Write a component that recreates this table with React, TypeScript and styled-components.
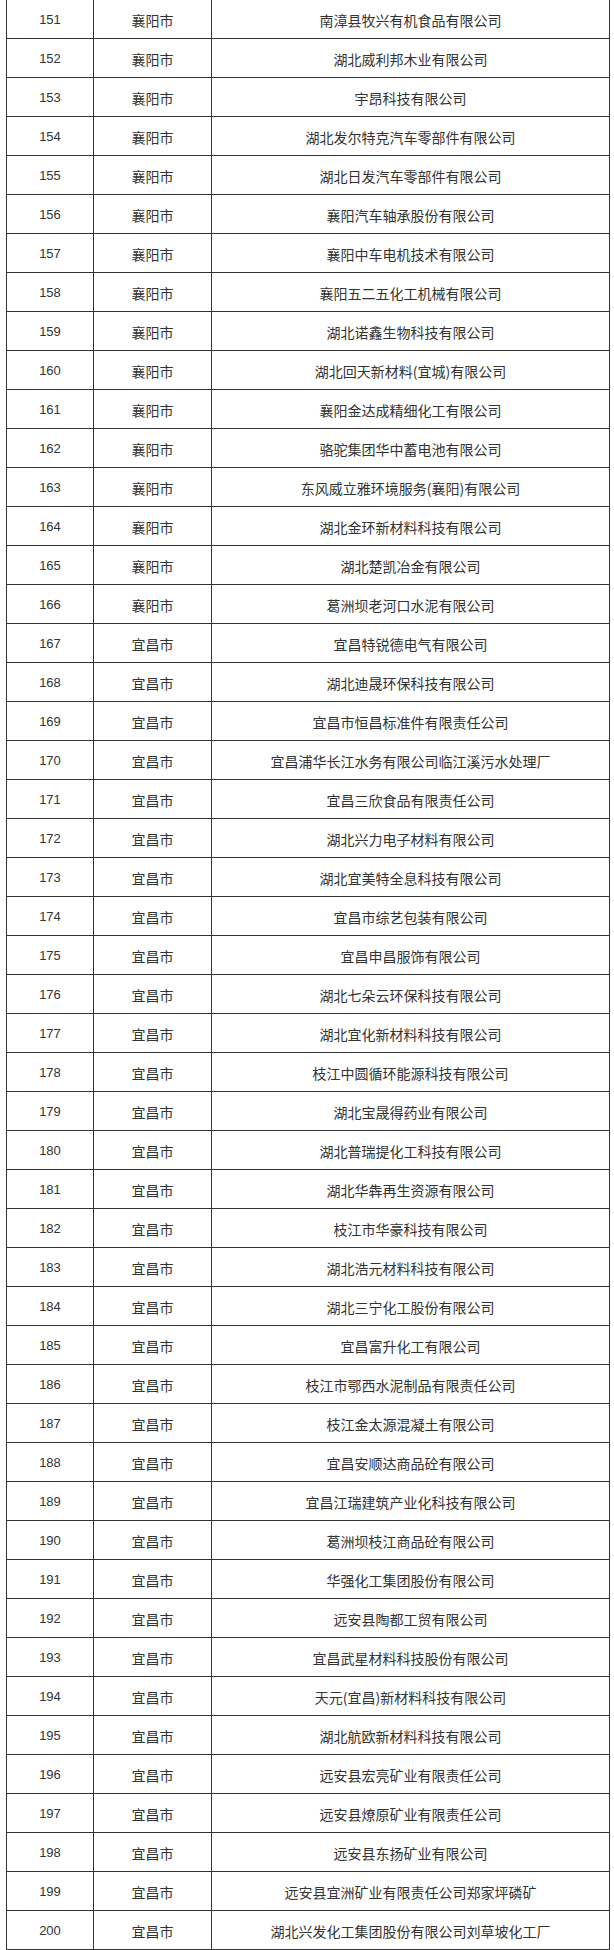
import React from "react";
import styled, { createGlobalStyle } from "styled-components";

const GlobalStyle = createGlobalStyle`
  html, body {
    margin: 0;
    padding: 0;
    background: #ffffff;
  }
  body {
    font-family: "Noto Sans CJK SC", "Noto Sans", sans-serif;
    color: #333333;
  }
`;

const Page = styled.div`
  width: 614px;
  padding-left: 6px;
  box-sizing: border-box;
  margin-top: -1px;
`;

const Table = styled.div`
  display: grid;
  grid-template-columns: 87px 118px 398px;
  width: 604px;
  border-left: 1px solid #333333;
  border-top: 1px solid #333333;
  box-sizing: border-box;
`;

const Cell = styled.div<{ $num?: boolean }>`
  box-sizing: border-box;
  height: 39px;
  border-right: 1px solid #333333;
  border-bottom: 1px solid #333333;
  display: flex;
  align-items: center;
  justify-content: center;
  font-family: ${(p) =>
    p.$num
      ? '"Liberation Sans", "Noto Sans CJK SC", sans-serif'
      : '"Noto Sans CJK SC", "Noto Sans", sans-serif'};
  font-size: ${(p) => (p.$num ? "13px" : "14px")};
  line-height: 1;
  color: #333333;
  white-space: nowrap;
  padding-top: 1px;
`;

const rows: [number, string, string][] = [
  [151, "襄阳市", "南漳县牧兴有机食品有限公司"],
  [152, "襄阳市", "湖北威利邦木业有限公司"],
  [153, "襄阳市", "宇昂科技有限公司"],
  [154, "襄阳市", "湖北发尔特克汽车零部件有限公司"],
  [155, "襄阳市", "湖北日发汽车零部件有限公司"],
  [156, "襄阳市", "襄阳汽车轴承股份有限公司"],
  [157, "襄阳市", "襄阳中车电机技术有限公司"],
  [158, "襄阳市", "襄阳五二五化工机械有限公司"],
  [159, "襄阳市", "湖北诺鑫生物科技有限公司"],
  [160, "襄阳市", "湖北回天新材料(宜城)有限公司"],
  [161, "襄阳市", "襄阳金达成精细化工有限公司"],
  [162, "襄阳市", "骆驼集团华中蓄电池有限公司"],
  [163, "襄阳市", "东风威立雅环境服务(襄阳)有限公司"],
  [164, "襄阳市", "湖北金环新材料科技有限公司"],
  [165, "襄阳市", "湖北楚凯冶金有限公司"],
  [166, "襄阳市", "葛洲坝老河口水泥有限公司"],
  [167, "宜昌市", "宜昌特锐德电气有限公司"],
  [168, "宜昌市", "湖北迪晟环保科技有限公司"],
  [169, "宜昌市", "宜昌市恒昌标准件有限责任公司"],
  [170, "宜昌市", "宜昌浦华长江水务有限公司临江溪污水处理厂"],
  [171, "宜昌市", "宜昌三欣食品有限责任公司"],
  [172, "宜昌市", "湖北兴力电子材料有限公司"],
  [173, "宜昌市", "湖北宜美特全息科技有限公司"],
  [174, "宜昌市", "宜昌市综艺包装有限公司"],
  [175, "宜昌市", "宜昌申昌服饰有限公司"],
  [176, "宜昌市", "湖北七朵云环保科技有限公司"],
  [177, "宜昌市", "湖北宜化新材料科技有限公司"],
  [178, "宜昌市", "枝江中圆循环能源科技有限公司"],
  [179, "宜昌市", "湖北宝晟得药业有限公司"],
  [180, "宜昌市", "湖北普瑞提化工科技有限公司"],
  [181, "宜昌市", "湖北华犇再生资源有限公司"],
  [182, "宜昌市", "枝江市华豪科技有限公司"],
  [183, "宜昌市", "湖北浩元材料科技有限公司"],
  [184, "宜昌市", "湖北三宁化工股份有限公司"],
  [185, "宜昌市", "宜昌富升化工有限公司"],
  [186, "宜昌市", "枝江市鄂西水泥制品有限责任公司"],
  [187, "宜昌市", "枝江金太源混凝土有限公司"],
  [188, "宜昌市", "宜昌安顺达商品砼有限公司"],
  [189, "宜昌市", "宜昌江瑞建筑产业化科技有限公司"],
  [190, "宜昌市", "葛洲坝枝江商品砼有限公司"],
  [191, "宜昌市", "华强化工集团股份有限公司"],
  [192, "宜昌市", "远安县陶都工贸有限公司"],
  [193, "宜昌市", "宜昌武星材料科技股份有限公司"],
  [194, "宜昌市", "天元(宜昌)新材料科技有限公司"],
  [195, "宜昌市", "湖北航欧新材料科技有限公司"],
  [196, "宜昌市", "远安县宏亮矿业有限责任公司"],
  [197, "宜昌市", "远安县燎原矿业有限责任公司"],
  [198, "宜昌市", "远安县东扬矿业有限公司"],
  [199, "宜昌市", "远安县宜洲矿业有限责任公司郑家坪磷矿"],
  [200, "宜昌市", "湖北兴发化工集团股份有限公司刘草坡化工厂"],
];

export default function App() {
  return (
    <>
      <GlobalStyle />
      <Page>
        <Table>
          {rows.map(([n, city, name]) => (
            <React.Fragment key={n}>
              <Cell $num>{n}</Cell>
              <Cell>{city}</Cell>
              <Cell>{name}</Cell>
            </React.Fragment>
          ))}
        </Table>
      </Page>
    </>
  );
}
